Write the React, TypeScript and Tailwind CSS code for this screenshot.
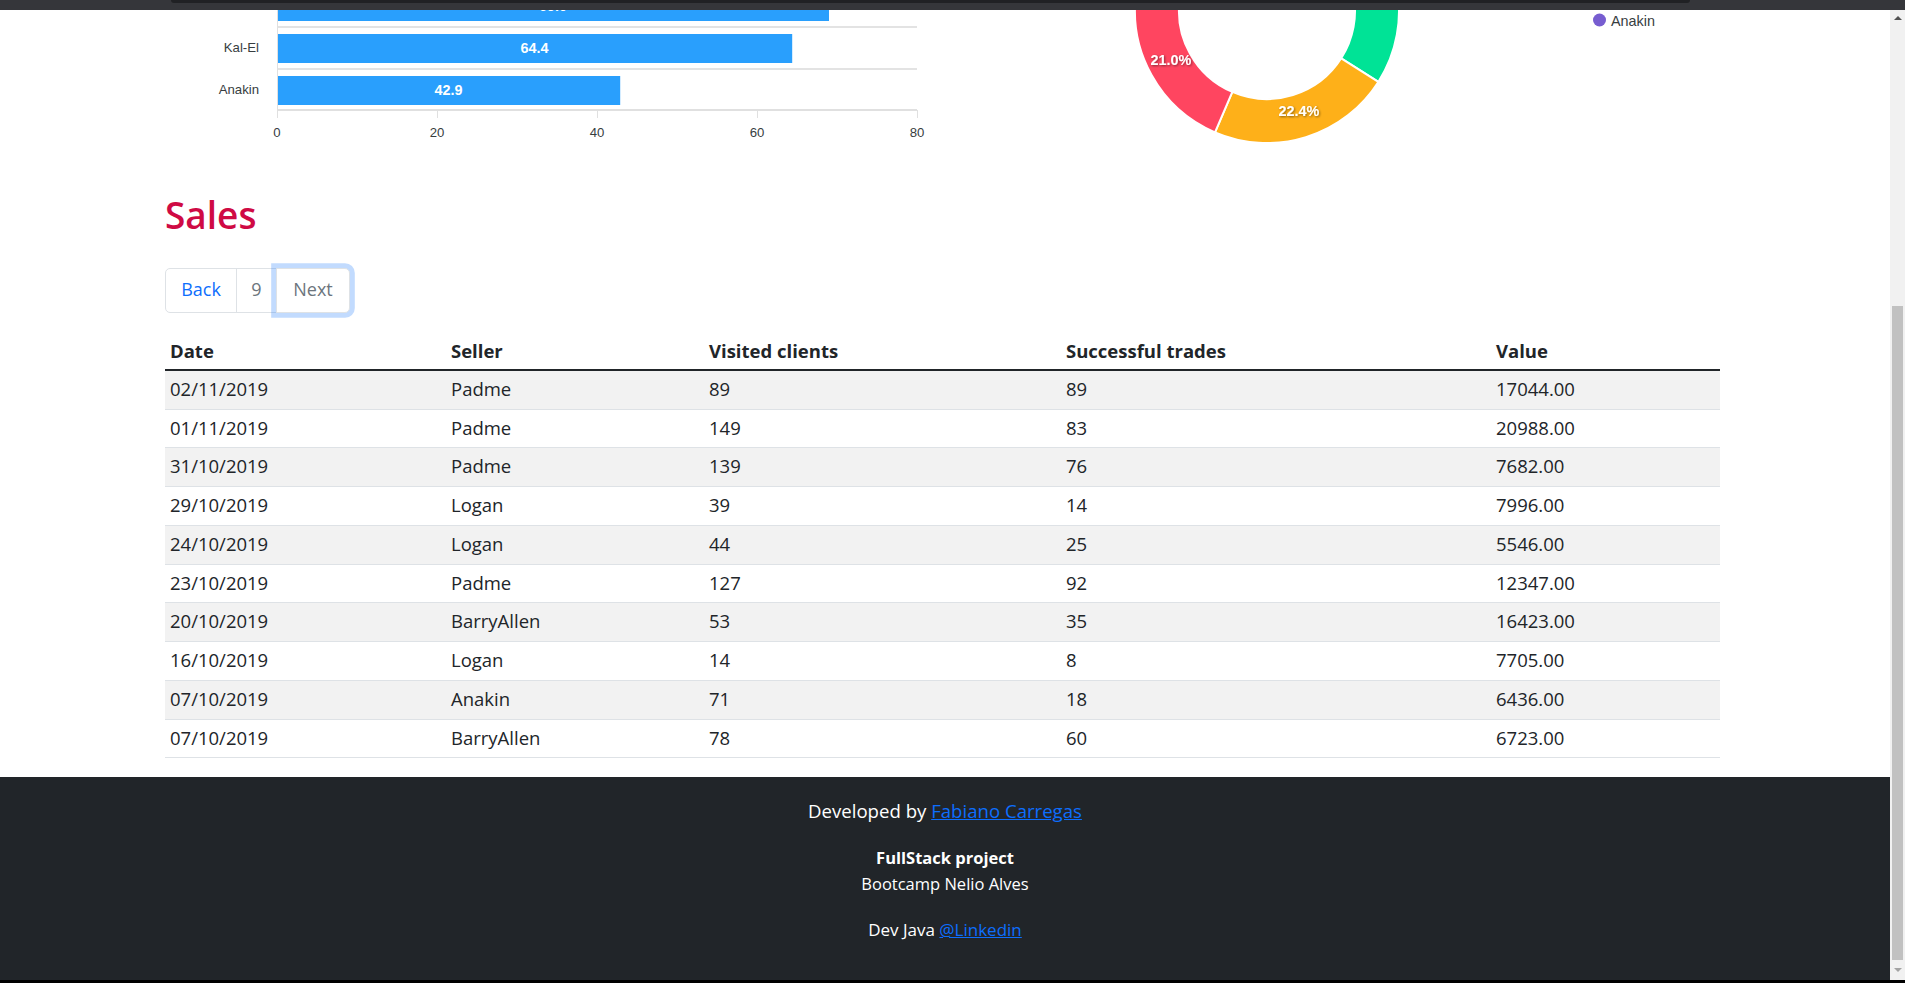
import React from 'react';

const sales = [
  ['02/11/2019', 'Padme', '89', '89', '17044.00'],
  ['01/11/2019', 'Padme', '149', '83', '20988.00'],
  ['31/10/2019', 'Padme', '139', '76', '7682.00'],
  ['29/10/2019', 'Logan', '39', '14', '7996.00'],
  ['24/10/2019', 'Logan', '44', '25', '5546.00'],
  ['23/10/2019', 'Padme', '127', '92', '12347.00'],
  ['20/10/2019', 'BarryAllen', '53', '35', '16423.00'],
  ['16/10/2019', 'Logan', '14', '8', '7705.00'],
  ['07/10/2019', 'Anakin', '71', '18', '6436.00'],
  ['07/10/2019', 'BarryAllen', '78', '60', '6723.00'],
];

const columns = [
  { title: 'Date', w: 'w-[281px]' },
  { title: 'Seller', w: 'w-[258px]' },
  { title: 'Visited clients', w: 'w-[357px]' },
  { title: 'Successful trades', w: 'w-[430px]' },
  { title: 'Value', w: 'w-[229px]' },
];

const chartFont = '"Liberation Sans", Arial, sans-serif';

// bar chart: x0 at 112, 8px per unit, rows every 42px (top row scrolled under the bar)
const bars = [
  { label: '', value: 69.0 },
  { label: 'Kal-El', value: 64.4 },
  { label: 'Anakin', value: 42.9 },
];

function BarChart() {
  const x0 = 112;
  return (
    <svg width="778" height="150" className="block overflow-hidden">
      {[17, 59].map((y) => (
        <rect key={y} x={x0} y={y - 1} width={640} height={2} fill="#e3e3e3" />
      ))}
      <rect x={x0} y={99} width={640} height={2} fill="#e0e0e0" />
      {[0, 20, 40, 60, 80].map((t) => (
        <g key={t}>
          <line x1={x0 + t * 8 + 0.5} x2={x0 + t * 8 + 0.5} y1={100} y2={108} stroke="#e0e0e0" />
          <text
            x={x0 + t * 8}
            y={122}
            textAnchor="middle"
            dominantBaseline="central"
            fontFamily={chartFont}
            fontSize="13.2"
            fill="#373d3f"
          >
            {t}
          </text>
        </g>
      ))}
      {bars.map((b, i) => {
        const y = -18 + i * 42;
        const w = b.value * 8;
        return (
          <g key={i}>
            <rect x={x0} y={y} width={w} height={29} fill="#299ffd" />
            <text
              x={x0 + w / 2}
              y={y + 14}
              textAnchor="middle"
              dominantBaseline="central"
              fontFamily={chartFont}
              fontSize="14.4"
              fontWeight="bold"
              fill="#fff"
            >
              {b.value.toFixed(1)}
            </text>
            {b.label && (
              <text
                x={94}
                y={y + 13.5}
                textAnchor="end"
                dominantBaseline="central"
                fontFamily={chartFont}
                fontSize="13.2"
                fill="#373d3f"
              >
                {b.label}
              </text>
            )}
          </g>
        );
      })}
      <line x1={x0 + 0.5} x2={x0 + 0.5} y1={0} y2={100} stroke="#e0e0e0" />
    </svg>
  );
}

function arcPath(cx: number, cy: number, r0: number, r1: number, a0: number, a1: number) {
  const rad = (a: number) => (a * Math.PI) / 180;
  const p = (r: number, a: number) => [cx + r * Math.cos(rad(a)), cy + r * Math.sin(rad(a))];
  const large = a1 - a0 > 180 ? 1 : 0;
  const [ox0, oy0] = p(r1, a0);
  const [ox1, oy1] = p(r1, a1);
  const [ix1, iy1] = p(r0, a1);
  const [ix0, iy0] = p(r0, a0);
  return `M${ox0} ${oy0} A${r1} ${r1} 0 ${large} 1 ${ox1} ${oy1} L${ix1} ${iy1} A${r0} ${r0} 0 ${large} 0 ${ix0} ${iy0} Z`;
}

const slices = [
  { color: '#008ffb', from: -90, to: -60 },
  { color: '#00e396', from: -60, to: 32.5 },
  { color: '#feb019', from: 32.5, to: 113.2 },
  { color: '#ff4560', from: 113.2, to: 188.8 },
  { color: '#775dd0', from: 188.8, to: 270 },
];

const sliceLabels = [
  { text: '21.0%', x: 228, y: 49.5 },
  { text: '22.4%', x: 356, y: 101 },
];

function DonutChart() {
  const cx = 324;
  const cy = 1;
  return (
    <svg width="777" height="150" className="block overflow-hidden">
      <defs>
        <filter id="lblShadow" x="-20%" y="-40%" width="140%" height="180%">
          <feDropShadow dx="1" dy="1" stdDeviation="1" floodColor="#000" floodOpacity="0.45" />
        </filter>
      </defs>
      {slices.map((s) => (
        <path key={s.color} d={arcPath(cx, cy, 88, 132, s.from, s.to)} fill={s.color} stroke="#fff" strokeWidth="2" />
      ))}
      {sliceLabels.map((l) => (
        <text
          key={l.text}
          x={l.x}
          y={l.y}
          textAnchor="middle"
          dominantBaseline="central"
          fontFamily={chartFont}
          fontSize="14.4"
          fontWeight="bold"
          fill="#fff"
          filter="url(#lblShadow)"
        >
          {l.text}
        </text>
      ))}
      <circle cx={656.5} cy={10} r={6.5} fill="#775dd0" />
      <text x={668} y={11} dominantBaseline="central" fontFamily={chartFont} fontSize="14.4" fill="#373d3f">
        Anakin
      </text>
    </svg>
  );
}

function Pagination() {
  return (
    <div className="flex text-[18px] leading-[24px]">
      <button className="h-[45px] w-[72px] rounded-l-[5px] border border-[#dee2e6] bg-white pb-[3px] text-[#0d6efd]">
        Back
      </button>
      <button className="-ml-px h-[45px] w-[41px] border border-[#dee2e6] bg-white pb-[3px] text-[#6c757d]">9</button>
      <button className="relative z-10 -ml-px h-[45px] w-[74px] rounded-r-[5px] border border-[#dee2e6] bg-white pb-[3px] text-[#6c757d] shadow-[0_0_0_4.8px_rgba(13,110,253,0.25)]">
        Next
      </button>
    </div>
  );
}

function SalesTable() {
  return (
    <table className="w-[1555px] table-fixed border-collapse text-left text-[18.5px] text-[#212529]">
      <thead>
        <tr className="border-b-2 border-[#212529]">
          {columns.map((c) => (
            <th key={c.title} className={`${c.w} h-[38px] px-[5px] font-bold`}>
              {c.title}
            </th>
          ))}
        </tr>
      </thead>
      <tbody>
        {sales.map((row, i) => (
          <tr key={i} className={`border-b border-[#dee2e6] ${i % 2 === 0 ? 'bg-[#f2f2f2]' : 'bg-white'}`}>
            {row.map((cell, j) => (
              <td key={j} className="h-[38.75px] px-[5px] pt-0 pb-[2px]">
                {cell}
              </td>
            ))}
          </tr>
        ))}
      </tbody>
    </table>
  );
}

function Scrollbar() {
  return (
    <div className="flex w-[15px] flex-none flex-col bg-[#f1f1f1]">
      <div className="flex h-[15px] items-center justify-center">
        <div className="h-0 w-0 border-x-[4px] border-b-[4px] border-x-transparent border-b-[#505050]" />
      </div>
      <div className="h-[281px]" />
      <div className="mx-[2px] h-[654px] bg-[#c1c1c1]" />
      <div className="flex flex-1 items-center justify-center">
        <div className="h-0 w-0 border-x-[4px] border-t-[4px] border-x-transparent border-t-[#a3a3a3]" />
      </div>
    </div>
  );
}

export default function App() {
  return (
    <div className="flex h-[983px] flex-col overflow-hidden bg-white font-['Open_Sans',sans-serif]">
      <div className="h-[10px] flex-none bg-[#35363a]">
        <div className="ml-[171px] h-[3px] w-[1519px] rounded-b-[3px] bg-[#202124]" />
      </div>
      <div className="flex min-h-0 flex-1">
        <main className="flex min-w-0 flex-1 flex-col">
          <div className="ml-[165px] flex w-[1555px]">
            <BarChart />
            <DonutChart />
          </div>
          <section className="ml-[165px] w-[1555px]">
            <h2 className="mt-[33px] text-[37px] leading-[1.2] font-semibold text-[#cf0a44]">Sales</h2>
            <div className="mt-[31px]">
              <Pagination />
            </div>
            <div className="mt-[19px]">
              <SalesTable />
            </div>
          </section>
          <div className="flex-1" />
          <footer className="h-[203px] flex-none bg-[#212529] pt-[22px] text-center text-white">
            <p className="text-[18.6px] leading-[24px]">
              Developed by{' '}
              <a href="#" className="text-[#0d6efd] underline">
                Fabiano Carregas
              </a>
            </p>
            <p className="mt-[22px] text-[16.5px] leading-[26px] font-bold">FullStack project</p>
            <p className="text-[16.5px] leading-[26px]">Bootcamp Nelio Alves</p>
            <p className="mt-[21px] text-[17px] leading-[24px]">
              Dev Java{' '}
              <a href="#" className="text-[#0d6efd] underline">
                @Linkedin
              </a>
            </p>
          </footer>
        </main>
        <Scrollbar />
      </div>
      <div className="h-[3px] flex-none bg-black" />
    </div>
  );
}
